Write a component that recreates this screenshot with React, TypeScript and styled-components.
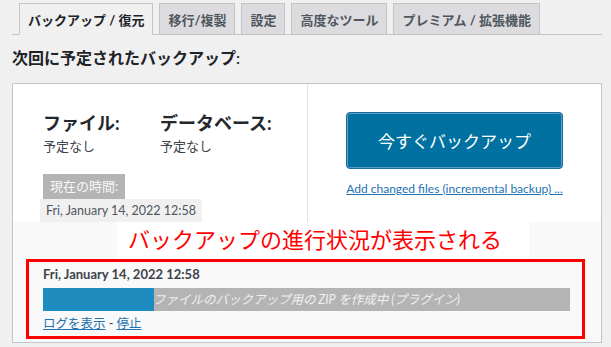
import React from "react";
import styled, { createGlobalStyle } from "styled-components";

const GlobalStyle = createGlobalStyle`
  html, body {
    margin: 0;
    padding: 0;
    background: #f0f0f1;
  }
  body {
    font-family: "Segoe UI", Lato, "Noto Sans CJK JP", sans-serif;
    color: #3c434a;
  }
`;

const Page = styled.div`
  width: 611px;
  height: 347px;
  box-sizing: border-box;
  padding: 0 9px 0 12px;
  overflow: hidden;
`;

const TabBar = styled.nav`
  display: flex;
  align-items: flex-end;
  gap: 6px;
  padding: 3px 0 0 7px;
  height: 31px;
  border-bottom: 1px solid #c3c4c7;
`;

const Tab = styled.div<{ $active?: boolean }>`
  box-sizing: border-box;
  height: 32px;
  margin-bottom: -1px;
  padding: 0 8px;
  display: flex;
  align-items: center;
  font-size: 13px;
  font-weight: 700;
  color: ${(p) => (p.$active ? "#1d2327" : "#50575e")};
  background: ${(p) => (p.$active ? "#f0f0f1" : "#dcdcde")};
  border: 1px solid #c3c4c7;
  border-bottom-color: ${(p) => (p.$active ? "#f0f0f1" : "#c3c4c7")};
  white-space: nowrap;
`;

const Heading = styled.h2`
  margin: 11px 0 13px;
  font-size: 16px;
  line-height: 24px;
  font-weight: 600;
  color: #1d2327;
`;

const Panel = styled.section`
  background: #fff;
  border: 1px solid #c3c4c7;
`;

const TopRow = styled.div`
  display: grid;
  grid-template-columns: 294px 1fr;
  height: 138px;
`;

const ScheduleCell = styled.div`
  display: flex;
  flex-direction: column;
  align-items: flex-start;
  padding: 27px 0 0 27px;
`;

const Columns = styled.div`
  display: flex;
  margin-left: 3px;
`;

const Column = styled.div`
  width: 117px;
`;

const Label = styled.div`
  font-size: 18px;
  line-height: 24px;
  font-weight: 700;
  color: #23282d;
`;

const Status = styled.div`
  margin-top: 2px;
  font-size: 13px;
  line-height: 18px;
`;

const TimeBadge = styled.div`
  margin: 19px 0 0 3px;
  padding: 0 7px;
  line-height: 25px;
  font-size: 13px;
  color: #f6f7f7;
  background: #b4b4b4;
`;

const TimeValue = styled.div`
  padding: 0 6px;
  line-height: 23px;
  font-size: 12.5px;
  color: #50575e;
  background: #f0f0f1;
  border-top-right-radius: 3px;
`;

const ActionCell = styled.div`
  display: flex;
  flex-direction: column;
  align-items: center;
  padding-top: 28px;
  border-left: 1px solid #e2e4e7;
`;

const BackupButton = styled.button`
  box-sizing: border-box;
  width: 217px;
  height: 57px;
  font-family: inherit;
  font-size: 17px;
  color: #fff;
  background: #0071a1;
  border: 1px solid #1c6b9c;
  border-radius: 4px;
  box-shadow: inset 0 0 0 1px #5a9ccb;
  cursor: pointer;
`;

const SmallLink = styled.a`
  margin-top: 12px;
  font-size: 12px;
  line-height: 16px;
  color: #2271b1;
  text-decoration: underline;
`;

const ProgressSection = styled.div`
  background: #f9f9f9;
  padding: 0 16px 3px 13px;
`;

const Callout = styled.div`
  margin-left: 91px;
  width: 412px;
  height: 37px;
  box-sizing: border-box;
  padding: 3px 0 0 11px;
  background: #fff;
  font-size: 22px;
  line-height: 30px;
  color: #ff0000;
  white-space: nowrap;
`;

const Highlight = styled.div`
  border: 3px solid #ff0000;
  padding: 3px 12px 3px 14px;
`;

const JobTime = styled.div`
  font-size: 13px;
  line-height: 18px;
  font-weight: 700;
  color: #3c434a;
`;

const Bar = styled.div`
  margin-top: 5px;
  display: grid;
  height: 23px;
  background: #b4b4b4;
`;

const BarFill = styled.div`
  grid-area: 1 / 1;
  background: #1e8cbe;
`;

const BarText = styled.div`
  grid-area: 1 / 1;
  text-align: center;
  font-size: 12.5px;
  line-height: 23px;
  font-style: italic;
  color: #f0f0f0;
  white-space: nowrap;
`;

const JobLinks = styled.div`
  margin-top: 4px;
  font-size: 12.5px;
  line-height: 18px;
  color: #3c434a;

  a {
    color: #2271b1;
    text-decoration: underline;
  }
`;

const tabs = ["バックアップ / 復元", "移行/複製", "設定", "高度なツール", "プレミアム / 拡張機能"];

export default function App() {
  const progress = 21;

  return (
    <>
      <GlobalStyle />
      <Page>
        <TabBar>
          {tabs.map((t, i) => (
            <Tab key={t} $active={i === 0}>
              {t}
            </Tab>
          ))}
        </TabBar>
        <Heading>次回に予定されたバックアップ:</Heading>
        <Panel>
          <TopRow>
            <ScheduleCell>
              <Columns>
                <Column>
                  <Label>ファイル:</Label>
                  <Status>予定なし</Status>
                </Column>
                <Column>
                  <Label>データベース:</Label>
                  <Status>予定なし</Status>
                </Column>
              </Columns>
              <TimeBadge>現在の時間:</TimeBadge>
              <TimeValue>Fri, January 14, 2022 12:58</TimeValue>
            </ScheduleCell>
            <ActionCell>
              <BackupButton>今すぐバックアップ</BackupButton>
              <SmallLink>Add changed files (incremental backup) ...</SmallLink>
            </ActionCell>
          </TopRow>
          <ProgressSection>
            <Callout>バックアップの進行状況が表示される</Callout>
            <Highlight>
              <JobTime>Fri, January 14, 2022 12:58</JobTime>
              <Bar>
                <BarFill style={{ width: `${progress}%` }} />
                <BarText>ファイルのバックアップ用の ZIP を作成中 (プラグイン)</BarText>
              </Bar>
              <JobLinks>
                <a>ログを表示</a> - <a>停止</a>
              </JobLinks>
            </Highlight>
          </ProgressSection>
        </Panel>
      </Page>
    </>
  );
}
